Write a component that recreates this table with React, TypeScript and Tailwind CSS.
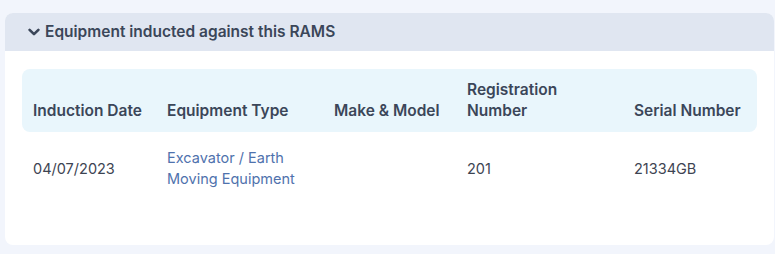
const rows = [
  {
    date: '04/07/2023',
    type: 'Excavator / Earth Moving Equipment',
    make: '',
    reg: '201',
    serial: '21334GB',
  },
];

function Chevron() {
  return (
    <svg width="12" height="9" viewBox="0 0 12 9" fill="none" className="text-[#3b4659]">
      <path d="M1.6 1.8 L6 6.2 L10.4 1.8" stroke="currentColor" strokeWidth="2.6" strokeLinecap="round" strokeLinejoin="round" />
    </svg>
  );
}

export default function App() {
  return (
    <div
      className="min-h-[254px] w-[775px] bg-[#f2f5fc] pt-[13px] pl-[5px] pr-[1px]"
      style={{ fontFamily: "Inter, 'Noto Sans', sans-serif" }}
    >
      <div className="h-[232px] overflow-hidden rounded-lg bg-white">
        {/* Header */}
        <div className="flex h-[38px] items-center gap-[5px] bg-[#e0e6f1] pl-[23px] text-[15.5px] font-semibold text-[#3b4659]">
          <Chevron />
          <span>Equipment inducted against this RAMS</span>
        </div>

        <div className="px-[17px] pt-[18px]">
          <table className="w-[735px] table-fixed border-separate border-spacing-0">
            <colgroup>
              <col className="w-[134px]" />
              <col className="w-[167px]" />
              <col className="w-[133px]" />
              <col className="w-[167px]" />
              <col />
            </colgroup>
            <thead>
              <tr className="bg-[#e9f6fc] text-left align-bottom text-[15.5px] text-[#3b4659]">
                <th className="h-[63px] rounded-l-lg pb-[11px] pl-[11px] font-semibold leading-[21px]">Induction Date</th>
                <th className="pb-[11px] pl-[11px] font-semibold leading-[21px]">Equipment Type</th>
                <th className="pb-[11px] pl-[11px] font-semibold leading-[21px]">Make &amp; Model</th>
                <th className="pb-[11px] pl-[11px] font-semibold leading-[21px]">
                  Registration
                  <br />
                  Number
                </th>
                <th className="rounded-r-lg pb-[11px] pl-[11px] font-semibold leading-[21px]">Serial Number</th>
              </tr>
            </thead>
            <tbody>
              {rows.map((r) => (
                <tr key={r.serial} className="align-middle text-[14.5px] leading-[21px] text-[#3d4452]">
                  <td className="h-[72px] pl-[11px]">{r.date}</td>
                  <td className="pl-[11px] pr-6 text-[#4f72ad]">{r.type}</td>
                  <td className="pl-[11px]">{r.make}</td>
                  <td className="pl-[11px]">{r.reg}</td>
                  <td className="pl-[11px]">{r.serial}</td>
                </tr>
              ))}
            </tbody>
          </table>
        </div>
      </div>
    </div>
  );
}
